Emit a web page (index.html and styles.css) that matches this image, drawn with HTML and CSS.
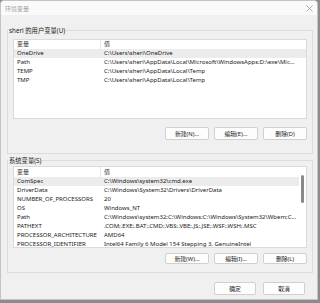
FILE: index.html
```html
<!DOCTYPE html>
<html lang="zh-CN">
<head>
  <meta charset="UTF-8">
  <title>环境变量</title>
  <link rel="stylesheet" href="styles.css">
</head>
<body>
  <div class="window">
    <div class="titlebar">
      <span class="title">环境变量</span>
      <svg class="close" width="7" height="7" viewBox="0 0 7 7"><path d="M0.5 0.5L6.5 6.5M6.5 0.5L0.5 6.5" stroke="#9a9a9a" stroke-width="0.8"/></svg>
    </div>

    <fieldset class="group user">
      <legend>sheri 的用户变量(U)</legend>
      <div class="list">
        <div class="row head"><span class="name">变量</span><span class="value">值</span></div>
        <div class="row selected"><span class="name">OneDrive</span><span class="value">C:\Users\sheri\OneDrive</span></div>
        <div class="row"><span class="name">Path</span><span class="value">C:\Users\sheri\AppData\Local\Microsoft\WindowsApps;D:\exe\Mic...</span></div>
        <div class="row"><span class="name">TEMP</span><span class="value">C:\Users\sheri\AppData\Local\Temp</span></div>
        <div class="row"><span class="name">TMP</span><span class="value">C:\Users\sheri\AppData\Local\Temp</span></div>
      </div>
      <div class="buttons">
        <button>新建(N)...</button>
        <button>编辑(E)...</button>
        <button>删除(D)</button>
      </div>
    </fieldset>

    <fieldset class="group system">
      <legend>系统变量(S)</legend>
      <div class="list scroll">
        <div class="rows">
          <div class="row head"><span class="name">变量</span><span class="value">值</span></div>
          <div class="row selected"><span class="name">ComSpec</span><span class="value">C:\Windows\system32\cmd.exe</span></div>
          <div class="row"><span class="name">DriverData</span><span class="value">C:\Windows\System32\Drivers\DriverData</span></div>
          <div class="row"><span class="name">NUMBER_OF_PROCESSORS</span><span class="value">20</span></div>
          <div class="row"><span class="name">OS</span><span class="value">Windows_NT</span></div>
          <div class="row"><span class="name">Path</span><span class="value">C:\Windows\system32;C:\Windows;C:\Windows\System32\Wbem;C...</span></div>
          <div class="row"><span class="name">PATHEXT</span><span class="value">.COM;.EXE;.BAT;.CMD;.VBS;.VBE;.JS;.JSE;.WSF;.WSH;.MSC</span></div>
          <div class="row"><span class="name">PROCESSOR_ARCHITECTURE</span><span class="value">AMD64</span></div>
          <div class="row"><span class="name">PROCESSOR_IDENTIFIER</span><span class="value">Intel64 Family 6 Model 154 Stepping 3, GenuineIntel</span></div>
        </div>
        <div class="scrollbar"><div class="thumb"></div></div>
      </div>
      <div class="buttons">
        <button>新建(W)...</button>
        <button>编辑(I)...</button>
        <button>删除(L)</button>
      </div>
    </fieldset>

    <div class="footer">
      <button>确定</button>
      <button>取消</button>
    </div>
  </div>
</body>
</html>
```

FILE: styles.css
```css
body {
  margin: 0;
  background-color: #8c8c8c;
  font-family: "Noto Sans", "Noto Sans CJK SC", sans-serif;
  font-size: 6px;
  color: #1a1a1a;
}
.window {
  width: 318px;
  height: 300px;
  box-sizing: border-box;
  border: 1px solid #c4c4c4;
  border-radius: 4px 4px 0 0;
  background-color: #f0f0f0;
  display: flex;
  flex-direction: column;
  overflow: hidden;
}
.titlebar {
  height: 14px;
  flex: none;
  background-color: #fafafa;
  display: flex;
  align-items: center;
  justify-content: space-between;
  padding: 0 4px 0 4px;
}
.title {
  color: #a0a0a0;
  font-size: 6px;
}
.close {
  display: block;
}
.group {
  margin: 11px 4px 0 6px;
  padding: 4px 5px 13px 5px;
  border: 1px solid #dcdcdc;
  min-width: 0;
}
.group legend {
  padding: 0 1px;
  margin-left: -5px;
  line-height: 9px;
  font-size: 6.3px;
}
.system {
  margin-top: 2px;
  padding-top: 1px;
  padding-bottom: 8px;
}
.list {
  height: 80px;
  background-color: #fff;
  border: 1px solid #dadada;
  box-sizing: border-box;
  overflow: hidden;
}
.system .list {
  height: 82px;
}
.scroll {
  display: flex;
}
.rows {
  flex: 1;
  min-width: 0;
}
.row {
  display: flex;
  height: 9px;
  line-height: 9px;
  white-space: nowrap;
}
.row.head {
  color: #333;
}
.system .row.head {
  height: 10px;
  line-height: 10px;
}
.row.selected {
  background-color: #ececec;
}
.name {
  width: 84px;
  flex: none;
  padding-left: 3px;
}
.row.head .name {
  border-right: 1px solid #e6e6e6;
  width: 83px;
}
.value {
  padding-left: 3px;
  overflow: hidden;
}
.scrollbar {
  width: 7px;
  flex: none;
  display: flex;
  justify-content: center;
  padding-top: 8px;
}
.thumb {
  width: 3px;
  height: 28px;
  border-radius: 2px;
  background-color: #8a8a8a;
}
.buttons {
  display: flex;
  justify-content: flex-end;
  gap: 5px;
  margin-top: 8px;
}
.system .buttons {
  margin-top: 5px;
}
.system button {
  height: 11px;
}
button {
  width: 44px;
  height: 13px;
  padding: 0;
  border: 1px solid #d0d0d0;
  border-radius: 2px;
  background-color: #fdfdfd;
  font-family: "Noto Sans", "Noto Sans CJK SC", sans-serif;
  font-size: 5.8px;
  color: #1a1a1a;
}
.footer {
  display: flex;
  justify-content: flex-end;
  gap: 7px;
  margin-top: 9px;
  padding-right: 12px;
}
.footer button {
  width: 42px;
}
```
